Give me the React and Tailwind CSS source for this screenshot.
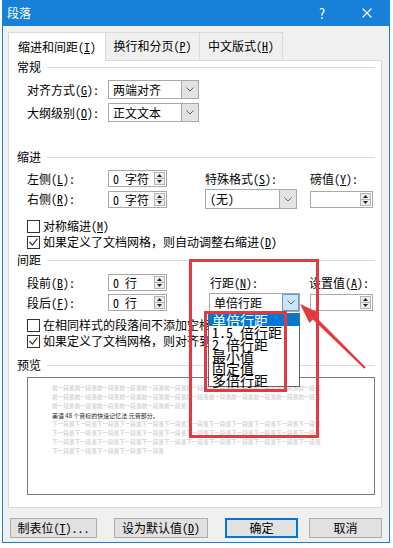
import React from "react";

const FONT = "font-['Noto_Sans_Mono_CJK_SC','Noto_Sans_CJK_SC','Liberation_Sans',sans-serif]";

function U({ children }) {
  return <span className="underline underline-offset-[1px]">{children}</span>;
}

function Chevron() {
  return (
    <svg width="8" height="5" viewBox="0 0 8 5">
      <polyline points="0.5,0.5 4,4 7.5,0.5" fill="none" stroke="#606060" strokeWidth="1" />
    </svg>
  );
}

// combo box with drop button at the right
function Select({ value, className, active }) {
  return (
    <div className={`flex border border-[#a9a9a9] bg-white ${className}`}>
      <div className="flex-1 whitespace-nowrap pl-[4px] leading-[17px]">{value}</div>
      {active ? (
        <div className="flex w-[17px] items-center justify-center border border-[#569de5] bg-[#cce4f7]">
          <Chevron />
        </div>
      ) : (
        <div className="flex w-[17px] items-center justify-center border-l border-[#a9a9a9] bg-[#e3e3e3]">
          <Chevron />
        </div>
      )}
    </div>
  );
}

// numeric box with up / down arrows
function Spin({ value, className }) {
  return (
    <div className={`flex h-[17px] items-center border border-[#a9a9a9] bg-white ${className}`}>
      <div className="flex-1 whitespace-nowrap pl-[4px] leading-[15px]">{value}</div>
      <div className="mr-[1px] flex h-[13px] w-[11px] flex-col border border-[#b5b5b5] bg-[#ececec]">
        <div className="flex flex-1 items-center justify-center border-b border-[#b5b5b5]">
          <svg width="5" height="3" viewBox="0 0 5 3">
            <polygon points="0,3 2.5,0 5,3" fill="#222" />
          </svg>
        </div>
        <div className="flex flex-1 items-center justify-center">
          <svg width="5" height="3" viewBox="0 0 5 3">
            <polygon points="0,0 5,0 2.5,3" fill="#222" />
          </svg>
        </div>
      </div>
    </div>
  );
}

function Check({ checked, className, children }) {
  return (
    <div className={`flex h-[14px] items-center pl-[18px] ${className}`}>
      <div className="flex h-[13px] w-[13px] shrink-0 items-center justify-center border border-[#333] bg-white">
        {checked && (
          <svg width="9" height="8" viewBox="0 0 9 8">
            <polyline points="0.5,4 3.5,7 8.5,0.5" fill="none" stroke="#333" strokeWidth="1.2" />
          </svg>
        )}
      </div>
      <span className="ml-[3px] whitespace-nowrap">{children}</span>
    </div>
  );
}

function Section({ title, className }) {
  return (
    <div className={`flex h-[12px] items-center pl-[8px] pr-[6px] ${className}`}>
      <span className="leading-[12px]">{title}</span>
      <div className="ml-[6px] h-px flex-1 bg-[#dcdcdc]" />
    </div>
  );
}

function Btn({ className, children }) {
  return (
    <div className={`flex h-[20px] items-center justify-center bg-[#e1e1e1] whitespace-nowrap ${className}`}>
      {children}
    </div>
  );
}

const before = "前一段落".repeat(12);
const after = "下一段落".repeat(12);

export default function App() {
  return (
    <div className={`relative h-[548px] w-[393px] overflow-hidden bg-white text-[12px] text-black ${FONT}`}>
      <div className="ml-[2px] flex w-[388px] flex-col border-x border-b border-[#1880d8] bg-[#f0f0f0]">
        {/* title bar */}
        <div className="flex h-[26px] items-center bg-[#1880d8] pl-[4px] text-white">
          <span>段落</span>
          <span className="ml-auto flex w-[46px] justify-center text-[14px]">?</span>
          <span className="flex w-[44px] justify-center">
            <svg width="10" height="10" viewBox="0 0 10 10">
              <path d="M0.5 0.5L9.5 9.5M9.5 0.5L0.5 9.5" stroke="#fff" strokeWidth="1.1" />
            </svg>
          </span>
        </div>

        {/* tabs */}
        <div className="relative z-10 -mb-px ml-[5px] mt-[6px] flex h-[29px] items-start">
          <div className="flex h-[29px] w-[98px] items-center justify-center border border-b-0 border-[#d9d9d9] bg-white">
            缩进和间距(<U>I</U>)
          </div>
          <div className="flex h-[28px] w-[94px] items-center justify-center border-y border-r border-t-[#d9d9d9] border-r-[#d9d9d9] border-b-transparent bg-[#f0f0f0]">
            换行和分页(<U>P</U>)
          </div>
          <div className="flex h-[28px] w-[83px] items-center justify-center border-y border-r border-t-[#d9d9d9] border-r-[#d9d9d9] border-b-transparent bg-[#f0f0f0]">
            中文版式(<U>H</U>)
          </div>
        </div>

        {/* tab page */}
        <div className="ml-[5px] flex h-[448px] w-[374px] flex-col border border-[#d9d9d9] bg-white">
          <Section title="常规" />
          <div className="mt-[7px] flex h-[19px] items-center pl-[18px]">
            <span className="w-[81px]">对齐方式(<U>G</U>):</span>
            <Select value="两端对齐" className="h-[19px] w-[91px]" />
          </div>
          <div className="mt-[4px] flex h-[19px] items-center pl-[18px]">
            <span className="w-[81px]">大纲级别(<U>O</U>):</span>
            <Select value="正文文本" className="h-[19px] w-[91px]" />
          </div>

          <Section title="缩进" className="mt-[29px]" />
          <div className="mt-[7px] flex h-[17px] items-center pl-[18px]">
            <span className="w-[81px]">左侧(<U>L</U>):</span>
            <Spin value="0 字符" className="w-[59px]" />
            <span className="ml-[38px] w-[105px]">特殊格式(<U>S</U>):</span>
            <span>磅值(<U>Y</U>):</span>
          </div>
          <div className="mt-[2px] flex h-[20px] items-center pl-[18px]">
            <span className="w-[81px]">右侧(<U>R</U>):</span>
            <Spin value="0 字符" className="w-[59px]" />
            <Select value="(无)" className="ml-[38px] h-[20px] w-[92px]" />
            <Spin value="" className="ml-[13px] w-[63px]" />
          </div>
          <Check className="mt-[10px]">对称缩进(<U>M</U>)</Check>
          <Check checked className="mt-[2px]">
            如果定义了文档网格，则自动调整右缩进(<U>D</U>)
          </Check>

          <Section title="间距" className="mt-[5px]" />
          <div className="mt-[8px] flex h-[17px] items-center pl-[18px]">
            <span className="w-[81px]">段前(<U>B</U>):</span>
            <Spin value="0 行" className="w-[59px]" />
            <span className="ml-[43px] w-[99px]">行距(<U>N</U>):</span>
            <span>设置值(<U>A</U>):</span>
          </div>
          <div className="mt-[2px] flex h-[19px] items-center pl-[18px]">
            <span className="w-[81px]">段后(<U>F</U>):</span>
            <Spin value="0 行" className="w-[59px]" />
            <Select value="单倍行距" active className="ml-[42px] h-[19px] w-[91px]" />
            <Spin value="" className="ml-[10px] w-[63px]" />
          </div>
          <Check className="mt-[6px]">在相同样式的段落间不添加空格(<U>C</U>)</Check>
          <Check checked className="mt-[2px]">
            如果定义了文档网格，则对齐到网格(<U>W</U>)
          </Check>

          <Section title="预览" className="mt-[11px]" />
          <div className="ml-[18px] mt-[6px] h-[118px] w-[348px] overflow-hidden border border-[#7a7a7a] bg-white pl-[24px] pt-[6px] font-['Noto_Sans_CJK_SC',sans-serif] text-[5.6px] leading-[9px] text-[#c2c2c2]">
            <div className="whitespace-nowrap">{before}</div>
            <div className="whitespace-nowrap">{before}</div>
            <div className="whitespace-nowrap">{"前一段落".repeat(6)}</div>
            <div className="whitespace-nowrap text-[6px] text-[#222]">美语 48 个音标的快速记忆法 元音部分。</div>
            <div className="whitespace-nowrap">{after}</div>
            <div className="whitespace-nowrap">{after}</div>
            <div className="whitespace-nowrap">{after}</div>
            <div className="whitespace-nowrap">{"下一段落".repeat(5)}</div>
          </div>
        </div>

        {/* buttons */}
        <div className="mt-[10px] mb-[4px] flex h-[20px] pl-[7px]">
          <Btn className="w-[87px] border border-[#adadad]">制表位(<U>T</U>)...</Btn>
          <Btn className="ml-[17px] w-[94px] border border-[#adadad]">设为默认值(<U>D</U>)</Btn>
          <Btn className="ml-[17px] w-[73px] border-2 border-[#0078d7]">确定</Btn>
          <Btn className="ml-[11px] w-[73px] border border-[#adadad]">取消</Btn>
        </div>
      </div>

      {/* open drop-down list */}
      <div className="absolute left-[208px] top-[313px] w-[92px] border border-[#646464] bg-white text-[14px] leading-[12px]">
        <div className="h-[12px] whitespace-nowrap bg-[#0078d7] pl-[3px] text-white">单倍行距</div>
        <div className="h-[12px] whitespace-nowrap pl-[3px]">1.5 倍行距</div>
        <div className="h-[12px] whitespace-nowrap pl-[3px]">2 倍行距</div>
        <div className="h-[12px] whitespace-nowrap pl-[3px]">最小值</div>
        <div className="h-[12px] whitespace-nowrap pl-[3px]">固定值</div>
        <div className="h-[12px] whitespace-nowrap pl-[3px]">多倍行距</div>
      </div>

      {/* red annotation marks */}
      <div className="absolute left-[189px] top-[259px] h-[179px] w-[130px] border-[3px] border-[#e5393f]" />
      <div className="absolute left-[204px] top-[311px] h-[81px] w-[83px] border-[3px] border-[#e5393f]" />
      <svg className="pointer-events-none absolute left-0 top-0" width="393" height="548" viewBox="0 0 393 548">
        <polygon
          points="300,304 319.2,313.1 315.7,316.7 365.7,367.3 364.3,368.7 312.9,319.5 309.4,323.1"
          fill="#e5393f"
        />
      </svg>
    </div>
  );
}
